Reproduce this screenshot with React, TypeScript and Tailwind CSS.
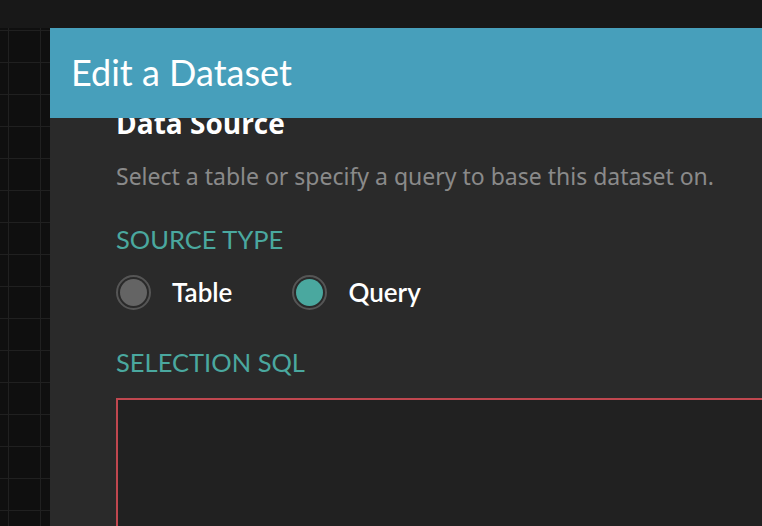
import React, { useState } from 'react';

const headingFont = { fontFamily: 'Lato, "Noto Sans", sans-serif' };

interface RadioProps {
  label: string;
  checked: boolean;
  onSelect: () => void;
}

const Radio: React.FC<RadioProps> = ({ label, checked, onSelect }) => (
  <button onClick={onSelect} className="flex items-center gap-[21px]">
    <span className="flex h-[35px] w-[35px] items-center justify-center rounded-full border-2 border-[#555555]">
      <span className={`h-[27px] w-[27px] rounded-full ${checked ? 'bg-[#4aa89f]' : 'bg-[#646464]'}`} />
    </span>
    <span className="text-[26px] font-semibold text-white" style={headingFont}>
      {label}
    </span>
  </button>
);

const App: React.FC = () => {
  const [sourceType, setSourceType] = useState<'table' | 'query'>('query');

  return (
    <div className="flex h-[526px] w-[762px] flex-col overflow-hidden bg-[#181818]">
      {/* top bar */}
      <div className="h-[28px] shrink-0 bg-[#181818]" />

      <div className="flex min-h-0 flex-1">
        {/* canvas behind the modal */}
        <div className="w-[50px] shrink-0 bg-[#0f0f0f] bg-[linear-gradient(to_right,#202020_1px,transparent_1px),linear-gradient(to_bottom,#202020_1px,transparent_1px)] bg-[size:32px_32px] bg-[position:8px_2px]" />

        {/* modal */}
        <div className="flex min-w-0 flex-1 flex-col bg-[#2a2a2a]">
          <div className="flex h-[90px] shrink-0 items-center bg-[#479fbb] px-[21px] pb-[2px]">
            <h1 className="text-[36px] font-normal text-white" style={headingFont}>
              Edit a Dataset
            </h1>
          </div>

          <div className="min-h-0 flex-1 overflow-hidden">
            <div className="-mt-[10px] pl-[66px]">
              <h2 className="text-[28px] font-bold leading-[31px] text-white" style={{ fontFamily: '"Open Sans", sans-serif' }}>
                Data Source
              </h2>
              <p className="mt-[20px] text-[23px] text-[#8a8a8a]" style={{ fontFamily: '"Noto Sans", sans-serif' }}>
                Select a table or specify a query to base this dataset on.
              </p>

              <div className="mt-[26px] text-[25.5px] uppercase text-[#4aa89f]" style={headingFont}>
                Source Type
              </div>
              <div className="mt-[15px] flex items-center gap-[60px]">
                <Radio label="Table" checked={sourceType === 'table'} onSelect={() => setSourceType('table')} />
                <Radio label="Query" checked={sourceType === 'query'} onSelect={() => setSourceType('query')} />
              </div>

              <div className="mt-[31px] text-[25.5px] uppercase text-[#4aa89f]" style={headingFont}>
                Selection SQL
              </div>
              <textarea
                className="mt-[17px] block h-[200px] w-[700px] resize-none border-2 border-[#c0474f] bg-[#212121] p-3 text-white outline-none"
                spellCheck={false}
              />
            </div>
          </div>
        </div>
      </div>
    </div>
  );
};

export default App;
